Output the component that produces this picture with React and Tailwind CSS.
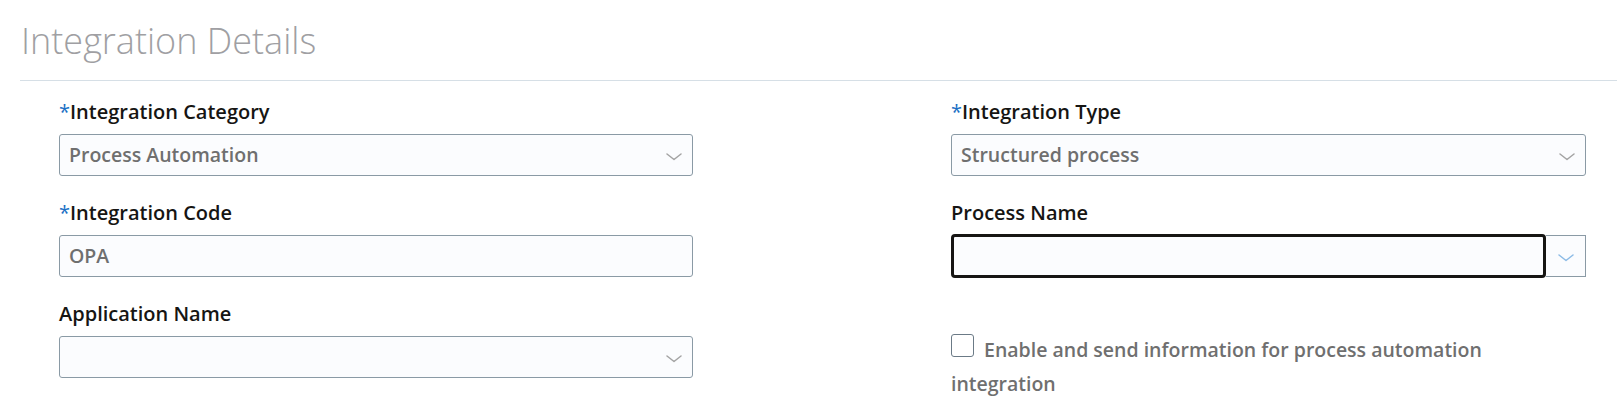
const FIELD_BOX = 'h-[42px] w-full border border-[#8a9aa5] rounded-[3px] bg-[#fbfcfe] flex items-center'

function Chevron({ color = '#a3a3a3' }) {
  return (
    <svg width="16" height="8" viewBox="0 0 16 8" fill="none" className="mt-[3px]">
      <polyline points="1,1 8,6.5 15,1" stroke={color} strokeWidth="1.5" strokeLinecap="round" strokeLinejoin="round" />
    </svg>
  )
}

function Label({ required, children }) {
  return (
    <div className="h-[24px] leading-[24px] text-[20px] font-semibold text-[#161513] mb-[10px]">
      {required && <span className="text-[#1a6fc4] font-normal">*</span>}
      {children}
    </div>
  )
}

function Select({ value }) {
  return (
    <div className={FIELD_BOX}>
      <span className="flex-1 pl-[9px] text-[19.5px] font-semibold text-[#6f6f6f]">{value}</span>
      <span className="mr-[10px]">
        <Chevron />
      </span>
    </div>
  )
}

export default function App() {
  return (
    <div className="w-full h-[405px] bg-white font-['Open_Sans',sans-serif] overflow-hidden">
      <div className="ml-[20px] pt-[20px] border-b border-[#d6dfe6] h-[81px]">
        <h1 className="pl-[1px] text-[36px] leading-[42px] font-light text-[#a09fa3]">Integration Details</h1>
      </div>

      <div className="grid grid-cols-[634px_635px] gap-x-[258px] gap-y-[25px] pl-[59px] pt-[19px]">
        <div>
          <Label required>Integration Category</Label>
          <Select value="Process Automation" />
        </div>
        <div>
          <Label required>Integration Type</Label>
          <Select value="Structured process" />
        </div>

        <div>
          <Label required>Integration Code</Label>
          <div className={FIELD_BOX}>
            <span className="pl-[9px] text-[19.5px] font-semibold text-[#6f6f6f]">OPA</span>
          </div>
        </div>
        <div>
          <Label>Process Name</Label>
          <div className="flex h-[42px]">
            <div className="flex-1 border-[3px] border-[#161513] rounded-[4px] bg-[#fbfcfe] -my-[1px]" />
            <div className="w-[40px] border border-l-0 border-[#8a9aa5] bg-[#fbfcfe] flex items-center justify-center">
              <Chevron color="#8cbbe6" />
            </div>
          </div>
        </div>

        <div>
          <Label>Application Name</Label>
          <Select value="" />
        </div>
        <div className="pt-[31px]">
          <p className="text-[19.5px] leading-[34px] font-semibold text-[#6f6f6f]">
            <span className="inline-block w-[23px] h-[23px] border border-[#6b7a86] rounded-[3px] bg-white align-[0px] mr-[10px]" />
            Enable and send information for process automation
            <br />
            integration
          </p>
        </div>
      </div>
    </div>
  )
}
